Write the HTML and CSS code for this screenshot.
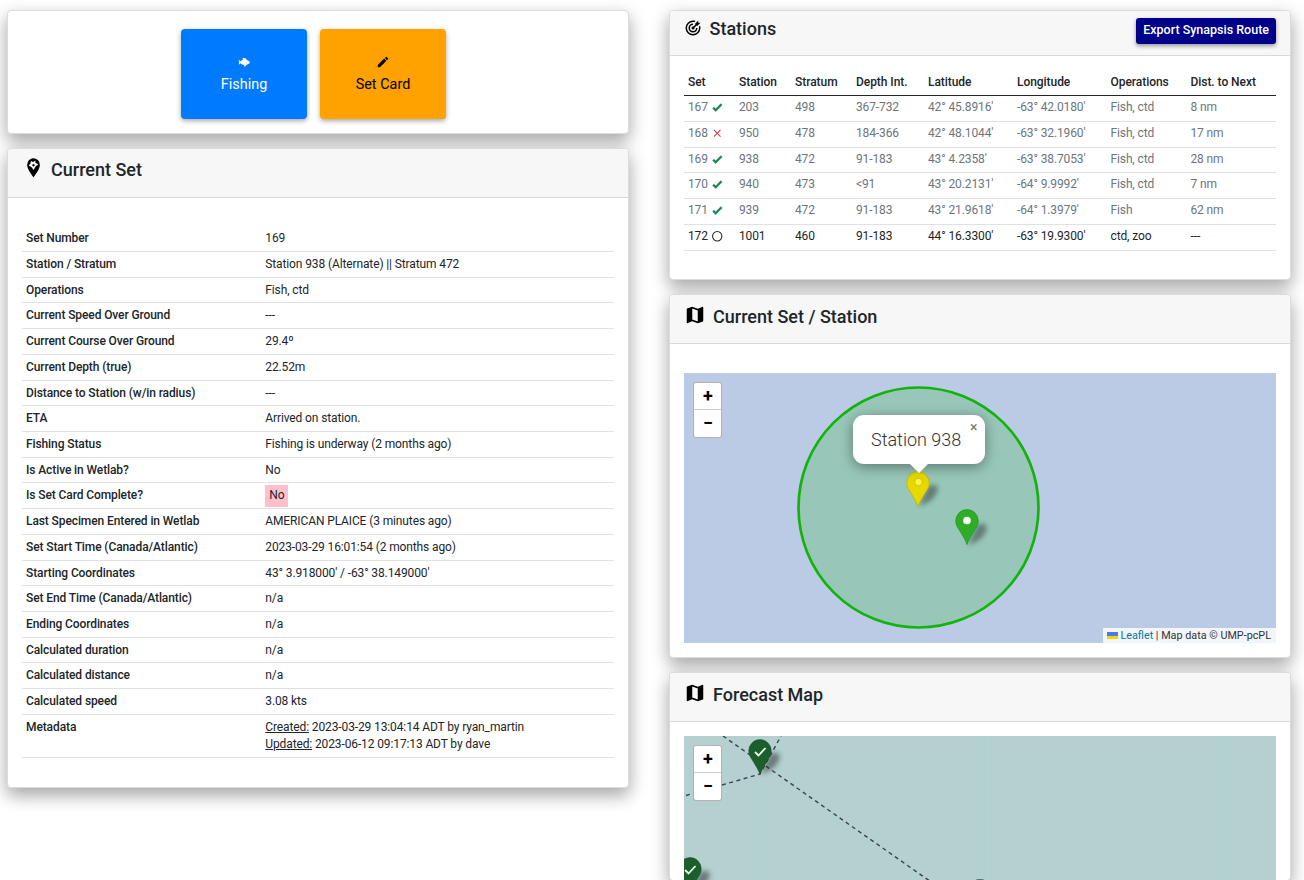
FILE: index.html
```html
<!DOCTYPE html>
<html lang="en">
<head>
<meta charset="utf-8">
<title>Cruise dashboard</title>
<link rel="stylesheet" href="styles.css">
</head>
<body>
<svg width="0" height="0" class="defs">
  <defs>
    <filter id="blur" x="-60%" y="-60%" width="220%" height="220%"><feGaussianBlur stdDeviation="2.4"/></filter>
    <symbol id="check" viewBox="0 0 24 24"><path stroke="#198754" stroke-width=".4" d="M9 20.42L2.79 14.21L5.62 11.38L9 14.77L18.88 4.88L21.71 7.71L9 20.42Z"/></symbol>
    <symbol id="close" viewBox="0 0 24 24"><path d="M19 6.41L17.59 5L12 10.59L6.41 5L5 6.41L10.59 12L5 17.59L6.41 19L12 13.41L17.59 19L19 17.59L13.41 12L19 6.41Z"/></symbol>
    <symbol id="circle" viewBox="0 0 24 24"><path d="M12 20A8 8 0 1 1 12 4A8 8 0 0 1 12 20M12 2A10 10 0 1 0 12 22A10 10 0 0 0 12 2Z"/></symbol>
    <symbol id="map" viewBox="0 0 24 24"><path fill-rule="evenodd" d="M15 19L9 16.890V5L15 7.110M20.500 3C20.440 3 20.390 3 20.340 3L15 5.100L9 3L3.360 4.900C3.150 4.970 3 5.150 3 5.380V20.500A.5.5 0 0 0 3.500 21C3.550 21 3.610 21 3.660 20.970L9 18.900L15 21L20.640 19.100C20.850 19 21 18.850 21 18.620V3.500A.5.5 0 0 0 20.500 3Z"/></symbol>
    <symbol id="pin" viewBox="0 0 24 36"><path d="M12 35.500C11 32 8 27 4 20.500C1.500 17 .8 14.500.8 11.800A11.200 11.200 0 0 1 23.200 11.800C23.200 14.500 22.500 17 20 20.500C16 27 13 32 12 35.500Z"/></symbol>
  </defs>
</svg>
<main class="page">
  <div class="column">
    <section class="card actions">
      <a class="action fishing"><svg viewBox="0 0 24 24"><path d="M12 20L12.760 17C9.500 16.790 6.590 15.400 5.750 13.580C5.660 14.060 5.530 14.500 5.330 14.830C4.670 16 3.330 16 2 16C3.100 16 3.500 14.430 3.500 12.500C3.500 10.570 3.100 9 2 9C3.330 9 4.670 9 5.330 10.170C5.530 10.500 5.660 10.940 5.750 11.420C6.400 10 8.320 8.850 10.660 8.320L9 5C11 5 13 5 14.330 5.670C15.460 6.230 16.110 7.270 16.690 8.380C19.610 9.080 22 10.660 22 12.500C22 14.380 19.500 16 16.500 16.660C15.670 17.760 14.860 18.780 14.170 19.330C13.330 20 12.670 20 12 20Z"/></svg><span>Fishing</span></a>
      <a class="action setcard"><svg viewBox="0 0 24 24"><path d="M20.710 7.040C21.100 6.650 21.100 6 20.710 5.630L18.370 3.290C18 2.900 17.350 2.900 16.960 3.290L15.120 5.120L18.870 8.870M3 17.250V21H6.750L17.810 9.930L14.060 6.180L3 17.250Z"/></svg><span>Set Card</span></a>
    </section>
    <section class="card">
      <header class="head"><svg class="hicon pin" viewBox="0 0 24 24"><path fill-rule="evenodd" d="M12 1.500A7.300 7.300 0 0 0 4.700 9C4.700 14.250 12 23 12 23S19.300 14.250 19.300 9A7.300 7.300 0 0 0 12 1.500M14 4L14.200 6.500L17.600 8.700L14.800 10.400L12 14.800L9.800 11.700L6.400 9.700L8.400 7.700L9 4.500L11.500 5.600ZM12 7.600L10.300 9.300L12 11L13.700 9.300Z"/></svg><h2>Current Set</h2></header>
      <dl class="facts">
        <div><dt>Set Number</dt><dd>169</dd></div>
        <div><dt>Station / Stratum</dt><dd>Station 938 (Alternate) || Stratum 472</dd></div>
        <div><dt>Operations</dt><dd>Fish, ctd</dd></div>
        <div><dt>Current Speed Over Ground</dt><dd>---</dd></div>
        <div><dt>Current Course Over Ground</dt><dd>29.4º</dd></div>
        <div><dt>Current Depth (true)</dt><dd>22.52m</dd></div>
        <div><dt>Distance to Station (w/in radius)</dt><dd>---</dd></div>
        <div><dt>ETA</dt><dd>Arrived on station.</dd></div>
        <div><dt>Fishing Status</dt><dd>Fishing is underway (2 months ago)</dd></div>
        <div><dt>Is Active in Wetlab?</dt><dd>No</dd></div>
        <div><dt>Is Set Card Complete?</dt><dd><span class="flag">No</span></dd></div>
        <div><dt>Last Specimen Entered in Wetlab</dt><dd>AMERICAN PLAICE (3 minutes ago)</dd></div>
        <div><dt>Set Start Time (Canada/Atlantic)</dt><dd>2023-03-29 16:01:54 (2 months ago)</dd></div>
        <div><dt>Starting Coordinates</dt><dd>43° 3.918000' / -63° 38.149000'</dd></div>
        <div><dt>Set End Time (Canada/Atlantic)</dt><dd>n/a</dd></div>
        <div><dt>Ending Coordinates</dt><dd>n/a</dd></div>
        <div><dt>Calculated duration</dt><dd>n/a</dd></div>
        <div><dt>Calculated distance</dt><dd>n/a</dd></div>
        <div><dt>Calculated speed</dt><dd>3.08 kts</dd></div>
        <div class="meta"><dt>Metadata</dt><dd><u>Created:</u> 2023-03-29 13:04:14 ADT by ryan_martin<br><u>Updated:</u> 2023-06-12 09:17:13 ADT by dave</dd></div>
      </dl>
    </section>
  </div>
  <div class="column">
    <section class="card stations">
      <header class="head"><svg class="hicon target" viewBox="0 0 24 24"><path d="M12 2A10 10 0 1 0 22 12C22 10.840 21.790 9.690 21.390 8.610L19.790 10.210C19.930 10.800 20 11.400 20 12A8 8 0 1 1 12 4C12.600 4 13.200 4.070 13.790 4.210L15.400 2.600C14.310 2.210 13.160 2 12 2M19 2L15 6V7.500L12.450 10.050C12.300 10 12.150 10 12 10A2 2 0 1 0 14 12C14 11.850 14 11.700 13.950 11.550L16.500 9H18L22 5H19V2M12 6A6 6 0 1 0 18 12H16A4 4 0 1 1 12 8V6Z"/></svg><h2>Stations</h2><a class="export">Export Synapsis Route</a></header>
      <div class="grid">
        <div class="row th"><span>Set</span><span>Station</span><span>Stratum</span><span>Depth Int.</span><span>Latitude</span><span>Longitude</span><span>Operations</span><span>Dist. to Next</span></div>
        <div class="row"><span>167 <svg class="ok"><use href="#check"/></svg></span><span>203</span><span>498</span><span>367-732</span><span>42° 45.8916'</span><span>-63° 42.0180'</span><span>Fish, ctd</span><span>8 nm</span></div>
        <div class="row"><span>168 <svg class="bad"><use href="#close"/></svg></span><span>950</span><span>478</span><span>184-366</span><span>42° 48.1044'</span><span>-63° 32.1960'</span><span>Fish, ctd</span><span>17 nm</span></div>
        <div class="row"><span>169 <svg class="ok"><use href="#check"/></svg></span><span>938</span><span>472</span><span>91-183</span><span>43° 4.2358'</span><span>-63° 38.7053'</span><span>Fish, ctd</span><span>28 nm</span></div>
        <div class="row"><span>170 <svg class="ok"><use href="#check"/></svg></span><span>940</span><span>473</span><span>&lt;91</span><span>43° 20.2131'</span><span>-64° 9.9992'</span><span>Fish, ctd</span><span>7 nm</span></div>
        <div class="row"><span>171 <svg class="ok"><use href="#check"/></svg></span><span>939</span><span>472</span><span>91-183</span><span>43° 21.9618'</span><span>-64° 1.3979'</span><span>Fish</span><span>62 nm</span></div>
        <div class="row next"><span>172 <svg><use href="#circle"/></svg></span><span>1001</span><span>460</span><span>91-183</span><span>44° 16.3300'</span><span>-63° 19.9300'</span><span>ctd, zoo</span><span>---</span></div>
      </div>
    </section>
    <section class="card current">
      <header class="head maphead"><svg class="hicon map"><use href="#map"/></svg><h2>Current Set / Station</h2></header>
      <div class="mapbox sea">
        <svg class="layer" width="592" height="270">
          <circle cx="234.500" cy="134.500" r="120" fill="#08b808" fill-opacity=".2" stroke="#12b40c" stroke-width="2.700"/>
          <path d="M235 133L244 113Q256 109 253 119Q249 129 235 133Z" fill="#222" opacity=".45" filter="url(#blur)"/>
          <use href="#pin" x="222" y="98" width="24" height="36" fill="#e6d800" stroke="#c4b600" stroke-width=".8"/>
          <circle cx="234.500" cy="109" r="3.800" fill="#fff04a" stroke="#d0bd00" stroke-width=".8"/>
          <path d="M284 172L293 152Q305 148 302 158Q298 168 284 172Z" fill="#222" opacity=".45" filter="url(#blur)"/>
          <use href="#pin" x="271" y="136" width="24" height="36" fill="#2eae28" stroke="#259820" stroke-width=".8"/>
          <circle cx="283" cy="147.500" r="3.800" fill="#fff"/>
        </svg>
        <div class="popup">Station 938<span class="x">×</span></div>
        <div class="zoom"><b>+</b><b>−</b></div>
        <div class="attribution"><i class="flagicon"></i><a>Leaflet</a> | Map data © UMP-pcPL</div>
      </div>
    </section>
    <section class="card forecast-card">
      <header class="head maphead"><svg class="hicon map"><use href="#map"/></svg><h2>Forecast Map</h2></header>
      <div class="mapbox forecast">
        <svg class="layer" width="592" height="144">
          <path d="M74.500 0V270M304.500 0V270M534.500 0V270" stroke="#badad8" stroke-width="1" opacity=".3"/>
          <g fill="none" stroke="#000" stroke-opacity=".68" stroke-width="1.400" stroke-dasharray="4 3.500">
            <path d="M2 59.500L76 38L97 0"/><path d="M39 0L76 26L250 148"/>
          </g>
          <path d="M77 38L86 18Q98 14 95 24Q91 34 77 38Z" fill="#222" opacity=".5" filter="url(#blur)"/>
          <use href="#pin" x="64" y="3" width="24" height="36" fill="#1d5e2d" stroke="#17502a" stroke-width=".6"/>
          <path d="M71 16L74.500 19.500L81.500 12" fill="none" stroke="#e8ffe8" stroke-width="1.800"/>
          <path d="M7 156L16 136Q28 132 25 142Q21 152 7 156Z" fill="#222" opacity=".5" filter="url(#blur)"/>
          <use href="#pin" x="-6" y="121" width="24" height="36" fill="#1d5e2d" stroke="#17502a" stroke-width=".6"/>
          <path d="M1 134L4.500 137.500L11.500 130" fill="none" stroke="#e8ffe8" stroke-width="1.800"/>
          <ellipse cx="296" cy="145" rx="5" ry="2" fill="#1c4240" opacity=".7"/>
        </svg>
        <div class="zoom"><b>+</b><b>−</b></div>
      </div>
    </section>
  </div>
</main>
</body>
</html>
```
FILE: styles.css
```css
* { box-sizing: border-box; }
body { margin: 0; height: 880px; overflow: hidden; background: #fff; color: #212529; font: 400 12px/17.3px Roboto, sans-serif; }
.defs { position: absolute; }
.page { display: grid; grid-template-columns: 622px 622px; column-gap: 40px; height: 880px; overflow: hidden; padding: 10px 13px 0 7px; }
.column { display: flex; flex-direction: column; gap: 14px; }
.card { border: 1px solid #dcdcdc; border-radius: 4px; background: #fff; box-shadow: 0 8px 16px rgba(0,0,0,.2), 0 6px 20px rgba(0,0,0,.19); }
.actions { display: flex; justify-content: center; gap: 13px; height: 124px; padding: 18px 10px 0 0; }
.action { display: flex; flex-direction: column; align-items: center; width: 126px; height: 90px; padding: 26px 0 0 1px; border-radius: 4px; font-size: 14.400px; line-height: 22px; letter-spacing: .03px; box-shadow: 0 2px 5px rgba(0,0,0,.35); }
.action svg { width: 14px; height: 14px; margin-bottom: 5px; fill: currentColor; }
.fishing { background: #007bff; color: #fff; }
.setcard { background: #ffa200; color: #000; }
.head { display: flex; align-items: flex-start; height: 49px; padding: 9px 14px 0 15px; border-bottom: 1px solid #d8d8d8; border-radius: 3px 3px 0 0; background: #f7f7f7; }
.head h2 { margin: 0; font-size: 18px; font-weight: 500; line-height: 24px; }
.maphead h2 { padding-top: 1px; }
.hicon { fill: #000; flex: none; }
.hicon.pin { width: 21px; height: 21px; margin: -1px 7px 0 0; }
.hicon.target { width: 18px; height: 18px; margin: -1px 7.500px 0 -1px; }
.hicon.map { width: 22px; height: 22px; margin: 0 7px 0 -1px; }
.facts { margin: 0; padding: 28.200px 14px 28.800px; letter-spacing: -.12px; }
.facts div { display: flex; height: 25.720px; padding: 4px 0 0 4px; border-bottom: 1px solid #dee2e6; }
.facts dt { width: 239.300px; font-weight: 500; letter-spacing: -.1px; }
.facts dd { margin: 0; }
.facts .meta { height: 43px; }
.flag { display: inline-block; margin-top: -2px; padding: 2px 4px; background: #ffc0cb; color: #212529; }
.stations { height: 270px; }
.stations .head { height: 45px; padding-top: 6px; }
.stations .hicon { margin-top: 2px; }
.export { margin: 1px 0 0 auto; height: 26px; padding: 0 7px; border-radius: 3px; background: #00008b; color: #fff; font-size: 12.500px; font-weight: 500; line-height: 23px; box-shadow: 0 2px 4px rgba(0,0,0,.4); }
.grid { padding: 14px 14px 0; letter-spacing: -.12px; }
.row { display: grid; grid-template-columns: 51px 56px 61px 72px 89px 93.500px 80px 1fr; height: 25.750px; padding: 3.200px 0 0 4px; border-bottom: 1px solid #dee2e6; color: #6c757d; }
.row.th { color: #212529; font-weight: 500; height: 26px; padding-top: 4px; border-color: #212529; letter-spacing: -.05px; }
.row.next { color: #212529; }
.row svg { width: 12.500px; height: 12.500px; vertical-align: -2.500px; fill: #222; }
.row .ok { fill: #198754; }
.row .bad { fill: #dc3545; }
.mapbox { position: relative; overflow: hidden; height: 270px; margin: 14px; }
.current .mapbox { margin-top: 29px; }
.forecast-card { height: 208px; border-bottom: 0; }
.forecast-card .mapbox { height: 144px; margin-bottom: 0; }
.sea { background: #bccbe5; }
.forecast { background: #b5d0d1; }
.layer { display: block; }
.zoom { position: absolute; left: 9px; top: 9px; width: 29px; height: 56px; border: 1px solid rgba(0,0,0,.3); border-radius: 3px; background: #fff; overflow: hidden; }
.zoom b { display: block; height: 26px; padding-left: 1px; color: #000; font: 700 18px/26px Roboto, sans-serif; text-align: center; }
.zoom b + b { height: 28px; border-top: 1px solid #ccc; line-height: 26px; }
.popup { position: absolute; left: 168.500px; top: 42px; width: 132px; height: 49px; padding-left: 18.500px; border-radius: 11px; background: #fff; color: #333; font-size: 18px; font-weight: 300; line-height: 49px; box-shadow: 0 3px 14px rgba(0,0,0,.4); }
.popup::after { content: ""; position: absolute; left: 57px; top: 49px; border: 9px solid transparent; border-top: 9px solid #fff; border-bottom: 0; }
.popup .x { position: absolute; right: 7px; top: 4px; color: #757575; font-size: 14px; font-weight: 400; line-height: 16px; }
.attribution { position: absolute; right: 0; bottom: 0; height: 15px; padding: 0 5px 0 4px; background: rgba(255,255,255,.8); color: #333; font-size: 10.800px; line-height: 15px; white-space: nowrap; }
.attribution a { color: #0078a8; }
.flagicon { display: inline-block; width: 11px; height: 7px; margin-right: 2px; background: linear-gradient(#4c7be1 50%, #ffd500 50%); }
```
